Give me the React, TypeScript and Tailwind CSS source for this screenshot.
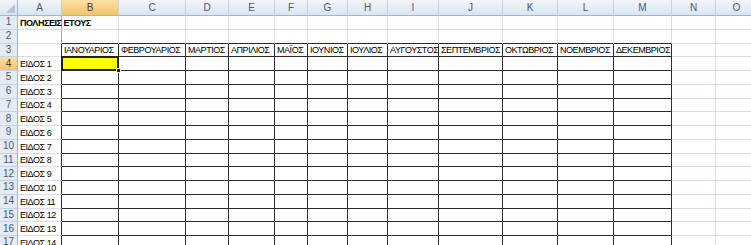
import React from "react";

const COLS = ["A", "B", "C", "D", "E", "F", "G", "H", "I", "J", "K", "L", "M", "N", "O"];

const MONTHS = [
  "ΙΑΝΟΥΑΡΙΟΣ",
  "ΦΕΒΡΟΥΑΡΙΟΣ",
  "ΜΑΡΤΙΟΣ",
  "ΑΠΡΙΛΙΟΣ",
  "ΜΑΪΟΣ",
  "ΙΟΥΝΙΟΣ",
  "ΙΟΥΛΙΟΣ",
  "ΑΥΓΟΥΣΤΟΣ",
  "ΣΕΠΤΕΜΒΡΙΟΣ",
  "ΟΚΤΩΒΡΙΟΣ",
  "ΝΟΕΜΒΡΙΟΣ",
  "ΔΕΚΕΜΒΡΙΟΣ",
];

const ROWS = Array.from({ length: 17 }, (_, i) => i + 1);

// πίνακας με μαύρα περιγράμματα: γραμμές 3-17, στήλες B-M
const inTable = (r: number, c: number) => r >= 3 && c >= 1 && c <= 12;

function cellText(r: number, c: number): string {
  if (r === 1 && c === 0) return "ΠΟΛΗΣΕΙΣ ΕΤΟΥΣ";
  if (r === 3 && c >= 1 && c <= 12) return MONTHS[c - 1];
  if (r >= 4 && c === 0) return `ΕΙΔΟΣ ${r - 3}`;
  return "";
}

function Cell({ r, c }: { r: number; c: number }) {
  const darkRight = inTable(r, c) || inTable(r, c + 1);
  const darkBottom = inTable(r, c) || inTable(r + 1, c);
  const greyRight = c === 0 && r < 3;
  const selected = r === 4 && c === 1;
  const text = cellText(r, c);

  return (
    <div
      className={
        "relative flex items-end border-r border-b px-[2px] leading-none " +
        (darkRight ? "border-r-[#2b2b2b] " : greyRight ? "border-r-[#a3a3a3] " : "border-r-[#d9dee8] ") +
        (darkBottom ? "border-b-[#2b2b2b] " : "border-b-[#d9dee8] ") +
        (selected ? "bg-[#ffff00] " : "bg-white ")
      }
    >
      {text && (
        <span
          className={
            "whitespace-nowrap pb-[1px] text-[9px] tracking-[-0.45px] text-black " +
            (r === 1 ? "relative z-10 font-bold" : "")
          }
        >
          {text}
        </span>
      )}
      {selected && (
        <>
          <div className="absolute -left-px -top-px -right-px -bottom-px z-20 border-2 border-[#1f1f1f]" />
          <div className="absolute -right-[3px] -bottom-[3px] z-30 h-[5px] w-[5px] border border-white bg-[#1f1f1f]" />
        </>
      )}
    </div>
  );
}

export default function App() {
  return (
    <div className="h-[245px] w-[751px] overflow-hidden bg-white font-['Liberation_Sans',Arial,sans-serif]">
      <div className="grid grid-cols-[18px_44px_57px_67px_43px_46px_33px_40px_40px_51px_64px_55px_56px_58px_44px_42px] grid-rows-[16px_repeat(17,13.75px)]">
        {/* γωνία πάνω αριστερά */}
        <div className="relative border-r border-b border-[#9eb6ce] bg-gradient-to-b from-[#f2f6fb] to-[#dbe4ef]">
          <svg className="absolute right-[2px] bottom-[2px]" width="9" height="9" viewBox="0 0 9 9">
            <polygon points="9,0 9,9 0,9" fill="#b4c3d8" />
          </svg>
        </div>

        {/* κεφαλίδες στηλών */}
        {COLS.map((l) => (
          <div
            key={l}
            className={
              "flex items-center justify-center border-r border-b border-r-[#c5d3e2] border-b-[#9eb6ce] text-[10px] leading-none " +
              (l === "B"
                ? "bg-gradient-to-b from-[#fbe0a6] to-[#f2c567] text-[#3d3d3d]"
                : "bg-gradient-to-b from-[#f2f6fb] to-[#dbe4ef] text-[#4a5a75]")
            }
          >
            {l}
          </div>
        ))}

        {ROWS.map((r) => (
          <React.Fragment key={r}>
            <div
              className={
                "flex items-center justify-center border-r border-b border-r-[#9eb6ce] border-b-[#c5d3e2] text-[10px] leading-none " +
                (r === 4
                  ? "bg-gradient-to-b from-[#fbe0a6] to-[#f2c567] text-[#3d3d3d]"
                  : "bg-[#e4ebf5] text-[#4a5a75]")
              }
            >
              {r}
            </div>
            {COLS.map((_, c) => (
              <Cell key={c} r={r} c={c} />
            ))}
          </React.Fragment>
        ))}
      </div>
    </div>
  );
}
